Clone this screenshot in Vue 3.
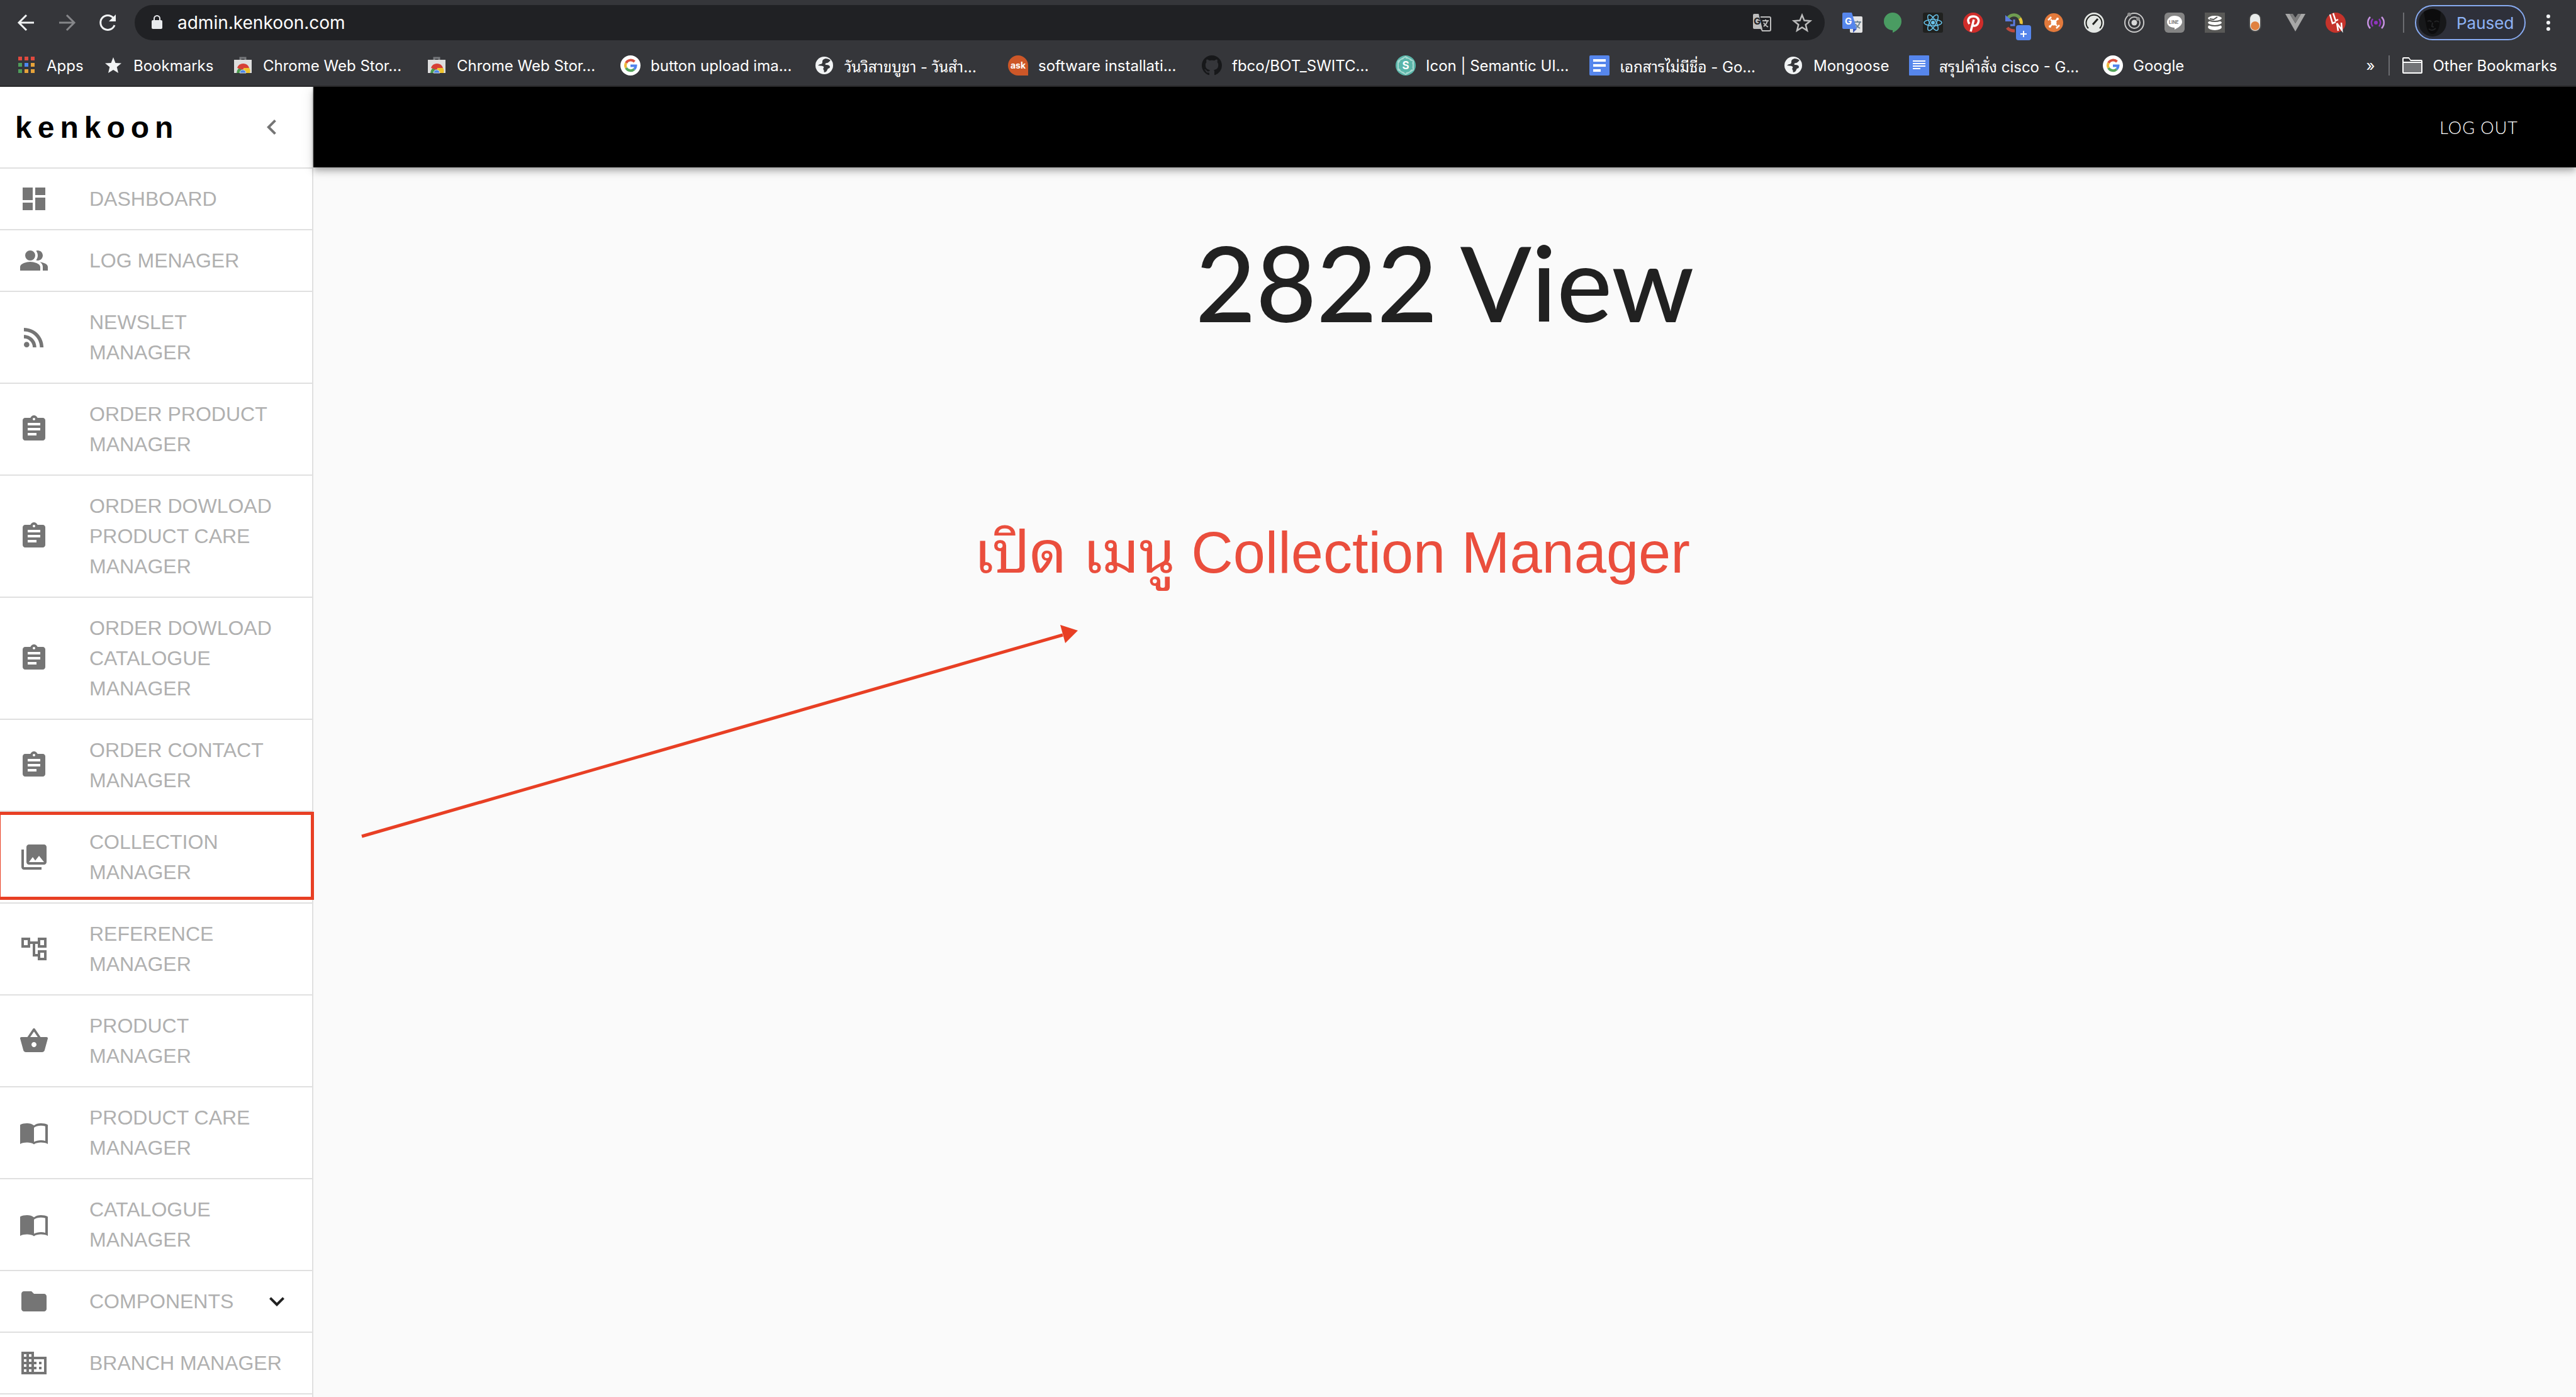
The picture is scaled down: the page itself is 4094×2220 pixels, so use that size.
<script setup>
import { ref } from 'vue'

const url = ref('admin.kenkoon.com')

const bookmarks = [
  { icon: 'apps', label: 'Apps', size: 'xs' },
  { icon: 'star', label: 'Bookmarks', size: 'md' },
  { icon: 'store', label: 'Chrome Web Stor...' },
  { icon: 'store', label: 'Chrome Web Stor...' },
  { icon: 'google', label: 'button upload ima...' },
  { icon: 'globe', label: 'วันวิสาขบูชา - วันสำ...' },
  { icon: 'ask', label: 'software installati...' },
  { icon: 'github', label: 'fbco/BOT_SWITC...' },
  { icon: 'semantic', label: 'Icon | Semantic UI...' },
  { icon: 'docsOld', label: 'เอกสารไม่มีชื่อ - Go...' },
  { icon: 'globe', label: 'Mongoose', size: 'sm' },
  { icon: 'docs', label: 'สรุปคำสั่ง cisco - G...' },
  { icon: 'google', label: 'Google', size: 'sm' }
]

const extensions = [
  'gtranslate', 'hangouts', 'react', 'pinterest', 'sync', 'drone', 'gauge',
  'target', 'line', 'stack', 'toggle', 'vue', 'ln', 'podcast'
]

const paths = {
  dashboard: 'M3 13h8V3H3v10zm0 8h8v-6H3v6zm10 0h8V11h-8v10zm0-18v6h8V3h-8z',
  people: 'M16.67 13.13C18.04 14.06 19 15.32 19 17v3h4v-3c0-2.18-3.57-3.47-6.33-3.87zM9 4a4 4 0 1 0 0 8 4 4 0 0 0 0-8zM15 12c2.21 0 4-1.79 4-4s-1.79-4-4-4c-.47 0-.91.1-1.33.24C14.5 5.27 15 6.58 15 8s-.5 2.73-1.33 3.76c.42.14.86.24 1.33.24zM9 13c-2.67 0-8 1.34-8 4v3h16v-3c0-2.66-5.33-4-8-4z',
  feed: 'M6.18 15.64a2.18 2.18 0 1 0 0 4.36 2.18 2.18 0 0 0 0-4.36zM4 4.44v2.83c7.03 0 12.73 5.7 12.73 12.73h2.83c0-8.59-6.97-15.56-15.56-15.56zm0 5.66v2.83c3.9 0 7.07 3.17 7.07 7.07h2.83c0-5.47-4.43-9.9-9.9-9.9z',
  assignment: 'M19 3h-4.18C14.4 1.84 13.3 1 12 1c-1.3 0-2.4.84-2.82 2H5c-1.1 0-2 .9-2 2v14c0 1.1.9 2 2 2h14c1.1 0 2-.9 2-2V5c0-1.1-.9-2-2-2zm-7 0c.55 0 1 .45 1 1s-.45 1-1 1-1-.45-1-1 .45-1 1-1zm2 14H7v-2h7v2zm3-4H7v-2h10v2zm0-4H7V7h10v2z',
  photos: 'M22 16V4c0-1.1-.9-2-2-2H8c-1.1 0-2 .9-2 2v12c0 1.1.9 2 2 2h12c1.1 0 2-.9 2-2zm-11-4l2.03 2.71L16 11l4 5H8l3-4zM2 6v14c0 1.1.9 2 2 2h14v-2H4V6H2z',
  tree: 'M22 11V3h-7v3H9V3H2v8h7V8h2v10h4v3h7v-8h-7v3h-2V8h2v3h7zM7 9H4V5h3v4zm10 6h3v4h-3v-4zm0-10h3v4h-3V5z',
  basket: 'M17.21 9l-4.38-6.56c-.19-.28-.51-.42-.83-.42-.32 0-.64.14-.83.43L6.79 9H2c-.55 0-1 .45-1 1 0 .09.01.18.04.27l2.54 9.27c.23.84 1 1.46 1.92 1.46h13c.92 0 1.69-.62 1.93-1.46l2.54-9.27L23 10c0-.55-.45-1-1-1h-4.79zM9 9l3-4.4L15 9H9zm3 8c-1.1 0-2-.9-2-2s.9-2 2-2 2 .9 2 2-.9 2-2 2z',
  book: 'M12 6.3C10.6 5 8.500 4.500 6.500 4.500S2.500 4.900 1 5.700V21c1.500-.8 3.500-1.200 5.500-1.200s4.100.4 5.500 1.500c1.400-1.100 3.500-1.500 5.500-1.500s4 .4 5.500 1.200V5.700c-1.500-.8-3.500-1.200-5.500-1.200S13.400 5 12 6.300zM12 8c1.500-1.200 3.500-1.600 5.500-1.600 1.200 0 2.400.2 3.500.5V18.500c-1.100-.3-2.300-.5-3.500-.5-2 0-4 .5-5.500 1.300z',
  folder: 'M10 4H4c-1.100 0-2 .9-2 2v12c0 1.100.9 2 2 2h16c1.100 0 2-.9 2-2V8c0-1.100-.9-2-2-2h-8l-2-2z',
  business: 'M12 7V3H2v18h20V7H12zM6 19H4v-2h2v2zm0-4H4v-2h2v2zm0-4H4V9h2v2zm0-4H4V5h2v2zm4 12H8v-2h2v2zm0-4H8v-2h2v2zm0-4H8V9h2v2zm0-4H8V5h2v2zm10 12h-8v-2h2v-2h-2v-2h2v-2h-2V9h8v10zm-2-8h-2v2h2v-2zm0 4h-2v2h2v-2z'
}

const menu = [
  { icon: 'dashboard', lines: ['DASHBOARD'] },
  { icon: 'people', lines: ['LOG MENAGER'] },
  { icon: 'feed', lines: ['NEWSLET', 'MANAGER'] },
  { icon: 'assignment', lines: ['ORDER PRODUCT', 'MANAGER'] },
  { icon: 'assignment', lines: ['ORDER DOWLOAD', 'PRODUCT CARE', 'MANAGER'] },
  { icon: 'assignment', lines: ['ORDER DOWLOAD', 'CATALOGUE', 'MANAGER'] },
  { icon: 'assignment', lines: ['ORDER CONTACT', 'MANAGER'] },
  { icon: 'photos', lines: ['COLLECTION', 'MANAGER'], marked: true },
  { icon: 'tree', lines: ['REFERENCE', 'MANAGER'] },
  { icon: 'basket', lines: ['PRODUCT', 'MANAGER'] },
  { icon: 'book', lines: ['PRODUCT CARE', 'MANAGER'] },
  { icon: 'book', lines: ['CATALOGUE', 'MANAGER'] },
  { icon: 'folder', lines: ['COMPONENTS'], expandable: true },
  { icon: 'business', lines: ['BRANCH MANAGER'] }
]
</script>

<template>
  <div class="window">
    <div class="browser">
      <div class="toolbar">
        <div class="nav-buttons">
          <button type="button" aria-label="Back">
            <svg viewBox="0 0 32 32" class="stroke light"><path d="M28 16H5M16 4L4 16l12 12" /></svg>
          </button>
          <button type="button" aria-label="Forward">
            <svg viewBox="0 0 32 32" class="stroke dim"><path d="M4 16h23M16 4l12 12-12 12" /></svg>
          </button>
          <button type="button" aria-label="Reload">
            <svg viewBox="0 0 32 32">
              <path d="M26 8.500A11.500 11.500 0 1 0 28 20" fill="none" stroke="#f1f3f4" stroke-width="3" />
              <path d="M30 3v11H19z" fill="#f1f3f4" />
            </svg>
          </button>
        </div>

        <div class="address">
          <svg viewBox="0 0 32 32">
            <rect x="7" y="12" width="17" height="14" rx="2" fill="#e8eaed" />
            <path d="M11 13V9.500a4.500 4.500 0 0 1 9 0V13" fill="none" stroke="#e8eaed" stroke-width="2" />
          </svg>
          <input v-model="url" type="text" aria-label="Address" />
          <button type="button" aria-label="Translate this page">
            <svg viewBox="0 0 32 32">
              <path d="M14 7h14a2 2 0 0 1 2 2v18a2 2 0 0 1-2 2H17l-3-5" fill="none" stroke="#bdbdbd" stroke-width="2" />
              <path d="M4 2h7l6 24H4a2 2 0 0 1-2-2V4a2 2 0 0 1 2-2z" fill="#bdbdbd" />
              <text x="3" y="19" font-size="15" font-weight="700" fill="#202124">G</text>
              <path d="M17 13h10M22 11v2M25 13c-1 5-4 7-6 9M19 16c1 3 4 5 7 7" fill="none" stroke="#bdbdbd" stroke-width="2" />
            </svg>
          </button>
          <button type="button" aria-label="Bookmark this page">
            <svg viewBox="0 0 32 32"><path d="M16 4l3.500 8.600 9.500.7-7.300 6 2.300 9.200-8-5-8 5 2.300-9.200-7.300-6 9.500-.7z" fill="none" stroke="#bdbdbd" stroke-width="2.500" /></svg>
          </button>
        </div>

        <div class="extensions">
          <button v-for="name in extensions" :key="name" type="button" :aria-label="name">
            <svg v-if="name === 'gtranslate'" viewBox="0 0 32 32">
              <rect x="12" y="6" width="20" height="26" rx="2" fill="#e4e4e4" />
              <path d="M19 15h11M24 13v2M28 15c-1 5-4 7-6 9M21 18c1 3 4 5 7 7" fill="none" stroke="#6f8593" stroke-width="2" />
              <path d="M17 26h6l-6 6z" fill="#3a56b8" />
              <path d="M2 0h13l8 26H2a2 2 0 0 1-2-2V2a2 2 0 0 1 2-2z" fill="#5686ec" />
              <text x="4" y="19" font-size="15" font-weight="700" fill="#fff">G</text>
            </svg>
            <svg v-else-if="name === 'hangouts'" viewBox="0 0 32 32">
              <path d="M16 0a14 14 0 0 1 14 14c0 8-6 14-14 18v-4A14 14 0 0 1 16 0z" fill="#4a9c62" />
            </svg>
            <svg v-else-if="name === 'react'" viewBox="0 0 32 32">
              <rect width="32" height="32" rx="3" fill="#20211f" />
              <g fill="none" stroke="#69c4ec" stroke-width="1.500">
                <ellipse cx="16" cy="16" rx="14" ry="5" />
                <ellipse cx="16" cy="16" rx="14" ry="5" transform="rotate(60 16 16)" />
                <ellipse cx="16" cy="16" rx="14" ry="5" transform="rotate(120 16 16)" />
              </g>
              <circle cx="16" cy="16" r="3" fill="#69c4ec" />
            </svg>
            <svg v-else-if="name === 'pinterest'" viewBox="0 0 32 32">
              <circle cx="16" cy="16" r="16" fill="#cf2d2a" />
              <path d="M10 18c-5-7 0-12 6-12 7 0 10 5 8 10-2 6-8 6-9 3M17 11l-5 19" fill="none" stroke="#fff" stroke-width="3.500" />
            </svg>
            <svg v-else-if="name === 'sync'" viewBox="0 0 48 48" class="badged">
              <path d="M7 9c5-7 15-7 19 0" fill="none" stroke="#6f9d50" stroke-width="5" />
              <path d="M26 9c2 3 3 6 2 9" fill="none" stroke="#e8c53a" stroke-width="5" />
              <path d="M3 4v10h12z" fill="#5b7be0" />
              <path d="M17 11v9h-6" fill="none" stroke="#5b7be0" stroke-width="3" />
              <path d="M6 24c3 4 7 5 12 5" fill="none" stroke="#bc4a3c" stroke-width="5" />
              <rect x="20" y="20" width="24" height="24" rx="4" fill="#5686ec" />
              <path d="M32 29v10M27 34h10" stroke="#fff" stroke-width="2" />
            </svg>
            <svg v-else-if="name === 'drone'" viewBox="0 0 32 32">
              <circle cx="16" cy="16" r="15" fill="#e27a3c" />
              <path d="M11 11l10 10M21 11L11 21M7 12l5-5M20 25l5-5" stroke="#fff" stroke-width="2.500" />
              <circle cx="16" cy="16" r="4.500" fill="#fff" />
              <circle cx="22" cy="10" r="2" fill="#fff" />
              <circle cx="10" cy="22" r="2" fill="#fff" />
            </svg>
            <svg v-else-if="name === 'gauge'" viewBox="0 0 32 32">
              <circle cx="16" cy="16" r="16" fill="#e4e7e4" />
              <path d="M7 25A12.500 12.500 0 1 1 25 25" fill="none" stroke="#20221f" stroke-width="2" />
              <path d="M14 19l8-9" stroke="#20221f" stroke-width="3" />
            </svg>
            <svg v-else-if="name === 'target'" viewBox="0 0 32 32">
              <g fill="none" stroke="#c9c9c9" stroke-width="2">
                <circle cx="16" cy="16" r="15" />
                <circle cx="16" cy="16" r="9" />
              </g>
              <circle cx="16" cy="16" r="4.500" fill="#d8d8d8" />
              <circle cx="8" cy="3" r="3" fill="#909090" />
              <circle cx="22" cy="10" r="3" fill="#909090" />
            </svg>
            <svg v-else-if="name === 'line'" viewBox="0 0 32 32">
              <rect width="32" height="32" rx="6" fill="#848484" />
              <path d="M16 5c7 0 12 4 12 10 0 5-6 9-12 12v-3C9 24 4 20 4 15S9 5 16 5z" fill="#fff" />
              <text x="7" y="18" font-size="7" font-weight="700" fill="#777">LINE</text>
            </svg>
            <svg v-else-if="name === 'stack'" viewBox="0 0 32 32">
              <rect width="32" height="32" fill="#595957" />
              <g fill="#fff">
                <ellipse cx="16" cy="23" rx="11" ry="5" />
                <ellipse cx="16" cy="16" rx="12" ry="5" stroke="#595957" stroke-width="2" />
                <ellipse cx="16" cy="9" rx="12" ry="5" stroke="#595957" stroke-width="2" />
              </g>
              <path d="M8 10l6 1 6-4" fill="none" stroke="#595957" stroke-width="2" />
            </svg>
            <svg v-else-if="name === 'toggle'" viewBox="0 0 32 32">
              <rect x="6" y="1" width="20" height="30" rx="10" fill="#4a4a4a" />
              <rect x="8" y="2" width="16" height="27" rx="8" fill="#e9ebea" />
              <circle cx="16" cy="21" r="7" fill="#e0813f" />
            </svg>
            <svg v-else-if="name === 'vue'" viewBox="0 0 32 32">
              <path d="M0 2h7l9 15 9-15h7L16 30z" fill="#a7a7a7" />
              <path d="M7 2h5l4 6 4-6h5l-9 15z" fill="#7c7c7c" />
            </svg>
            <svg v-else-if="name === 'ln'" viewBox="0 0 32 32">
              <circle cx="16" cy="16" r="16" fill="#c5332b" />
              <path d="M7 3l4 14 5-2M12 1l4 12 4-2" fill="none" stroke="#fff" stroke-width="2.500" />
              <path d="M20 29l-2-12 8 11-1-12" fill="none" stroke="#fff" stroke-width="2.500" />
            </svg>
            <svg v-else viewBox="0 0 32 32">
              <g fill="none" stroke-width="2.500">
                <path d="M7 7c-5 5-5 13 0 18M25 7c5 5 5 13 0 18" stroke="#c793e2" />
                <path d="M11 10c-3 4-3 8 0 12M21 10c3 4 3 8 0 12" stroke="#8f35bd" />
              </g>
              <circle cx="16" cy="16" r="3" fill="#8f35bd" />
            </svg>
          </button>
        </div>

        <span class="divider tools-divider"></span>

        <button type="button" class="profile">
          <svg viewBox="0 0 44 44">
            <circle cx="22" cy="22" r="22" fill="#17181a" />
            <path d="M8 5c8-6 20-6 27 0l-2 20c-1 9-6 15-11 15S13 34 12 26z" fill="#0c0c0d" />
            <path d="M14 20c3-2 5-1 6 1M25 21c2-2 5-2 7 0M22 22l-1 6 3 1M16 32c4 3 8 2 11-1" fill="none" stroke="#232426" stroke-width="2" />
          </svg>
          <span>Paused</span>
        </button>

        <button type="button" class="more" aria-label="More">
          <svg viewBox="0 0 32 32" fill="#f1f3f4">
            <circle cx="16" cy="6" r="3" />
            <circle cx="16" cy="16" r="3" />
            <circle cx="16" cy="26" r="3" />
          </svg>
        </button>
      </div>

      <nav class="bookmarks" aria-label="Bookmarks">
        <a v-for="(item, i) in bookmarks" :key="i" href="#" class="bookmark" :class="item.size">
          <svg v-if="item.icon === 'apps'" viewBox="0 0 32 32">
            <g fill="#e04a3f"><path d="M3 2h6v6H3zM13 2h6v6h-6zM23 2h6v6h-6z" /></g>
            <path d="M3 12h6v6H3zM3 22h6v6H3z" fill="#4f9e5b" />
            <path d="M13 12h6v6h-6z" fill="#4c88f0" />
            <path d="M23 12h6v6h-6zM13 22h6v6h-6zM23 22h6v6h-6z" fill="#e6a33a" />
          </svg>
          <svg v-else-if="item.icon === 'star'" viewBox="0 0 32 32">
            <path d="M16 3l3.500 9 9.500.6-7.300 6L24 28l-8-5-8 5 2.300-9.400-7.300-6 9.500-.6z" fill="#f1f3f4" />
          </svg>
          <svg v-else-if="item.icon === 'store'" viewBox="0 0 32 32">
            <path d="M12 8V4h8v4" fill="none" stroke="#77797c" stroke-width="3" />
            <path d="M2 7h28v21H2z" fill="#dedede" />
            <path d="M6 28a10 10 0 0 1 20 0z" fill="#4a9b4e" />
            <path d="M7 20a10 10 0 0 1 19 0l-10 3z" fill="#d63f35" />
            <path d="M17 20h9c2 3 2 5 1 8H16z" fill="#eec32d" />
            <path d="M11 28a5 5 0 0 1 10 0z" fill="#4a86e8" stroke="#dedede" />
          </svg>
          <svg v-else-if="item.icon === 'google'" viewBox="0 0 32 32">
            <circle cx="16" cy="16" r="16" fill="#fff" />
            <g fill="none" stroke-width="4">
              <path d="M9 12a8.500 8.500 0 0 1 13.500-2" stroke="#d9503f" />
              <path d="M9 20a8.500 8.500 0 0 1 0-8" stroke="#efb83a" />
              <path d="M22 22a8.500 8.500 0 0 1-13-2" stroke="#55a55b" />
              <path d="M16 16.500h8.500c0 2-1 4-2.500 5.500" stroke="#5083ec" />
            </g>
          </svg>
          <svg v-else-if="item.icon === 'globe'" viewBox="0 0 32 32">
            <circle cx="16" cy="16" r="14" fill="#f1f3f4" />
            <path d="M18 5c-4 1-5 3-5 5 0 3-1 4-4 4l-3 2c4 1 7 0 9 2 1 2-2 3 0 5 1 1 0 2 1 4 5-1 4-4 6-6 2-1 3-1 3-3-1-3-4-3-7-3-1-2 0-3 3-3 3-1 3-3 5-4-2-2-5-3-8-3z" fill="#35363a" />
          </svg>
          <svg v-else-if="item.icon === 'ask'" viewBox="0 0 32 32">
            <path d="M16 0a16 16 0 0 1 16 16v16H16a16 16 0 0 1 0-32z" fill="#cd5728" />
            <text x="16" y="21" font-size="14" font-weight="700" text-anchor="middle" fill="#fff">ask</text>
          </svg>
          <svg v-else-if="item.icon === 'github'" viewBox="0 0 16 16">
            <path d="M8 0C3.580 0 0 3.580 0 8c0 3.540 2.290 6.530 5.470 7.590.4.070.55-.17.55-.38 0-.19-.01-.82-.01-1.490-2.010.37-2.530-.49-2.690-.94-.09-.23-.48-.94-.82-1.130-.28-.15-.68-.52-.01-.53.63-.01 1.080.58 1.230.82.72 1.210 1.870.87 2.330.66.07-.52.28-.87.51-1.070-1.780-.2-3.640-.89-3.640-3.950 0-.87.31-1.590.82-2.150-.08-.2-.36-1.020.08-2.120 0 0 .67-.21 2.200.82.64-.18 1.320-.27 2-.27s1.360.09 2 .27c1.530-1.040 2.200-.82 2.200-.82.44 1.100.16 1.920.08 2.120.51.56.82 1.270.82 2.150 0 3.070-1.870 3.750-3.650 3.950.29.25.54.73.54 1.480 0 1.070-.01 1.930-.01 2.200 0 .21.15.46.55.38A8.010 8.010 0 0 0 16 8c0-4.420-3.580-8-8-8z" fill="#17181a" />
          </svg>
          <svg v-else-if="item.icon === 'semantic'" viewBox="0 0 32 32">
            <circle cx="16" cy="16" r="16" fill="#5ab5a9" />
            <g fill="none" stroke="#a5d8d0" stroke-width="2">
              <circle cx="16" cy="16" r="12" stroke-dasharray="4 3" />
              <path d="M16 2l12 7v14l-12 7-12-7V9z" />
            </g>
            <circle cx="16" cy="16" r="7" fill="#5ab5a9" />
            <text x="16" y="22" font-size="17" font-weight="700" text-anchor="middle" fill="#fff">S</text>
          </svg>
          <svg v-else-if="item.icon === 'docsOld'" viewBox="0 0 32 32">
            <rect width="32" height="32" rx="2" fill="#5686ec" />
            <path d="M6 8h20M6 16h20M6 24h12" stroke="#fff" stroke-width="4" />
          </svg>
          <svg v-else viewBox="0 0 32 32">
            <rect width="32" height="32" rx="1" fill="#5686ec" />
            <path d="M6 9h20M6 13h20M6 17h20M6 21h12" stroke="#fff" stroke-width="2" />
          </svg>
          <span>{{ item.label }}</span>
        </a>
        <button type="button" class="overflow" aria-label="More bookmarks">»</button>
        <span class="divider"></span>
        <a href="#" class="bookmark other">
          <svg viewBox="0 0 32 32">
            <path d="M1 27V5a1 1 0 0 1 1-1h8l3 4h17a1 1 0 0 1 1 1v18a1 1 0 0 1-1 1H2a1 1 0 0 1-1-1z" fill="#737477" stroke="#fff" stroke-width="2" />
            <path d="M2 5h8l3 4h17v2H2z" fill="#35363a" />
            <path d="M1 11h30" stroke="#fff" stroke-width="2" />
          </svg>
          <span>Other Bookmarks</span>
        </a>
      </nav>
    </div>

    <div class="app">
      <aside class="sidebar">
        <div class="brand">
          <a href="#" class="logo">kenkoon</a>
          <button type="button" aria-label="Collapse menu">
            <svg viewBox="0 0 24 24"><path d="M15.410 7.410L14 6l-6 6 6 6 1.410-1.410L10.830 12z" fill="#757575" /></svg>
          </button>
        </div>
        <nav aria-label="Main menu">
          <a v-for="(item, i) in menu" :key="i" href="#" class="item" :class="{ marked: item.marked }">
            <svg viewBox="0 0 24 24" class="item-icon"><path :d="paths[item.icon]" fill-rule="evenodd" /></svg>
            <span class="item-label"><span v-for="line in item.lines" :key="line">{{ line }}</span></span>
            <svg v-if="item.expandable" viewBox="0 0 24 24" class="expand">
              <path d="M16.590 8.590L12 13.170 7.410 8.590 6 10l6 6 6-6z" />
            </svg>
          </a>
        </nav>
      </aside>

      <div class="content">
        <header class="appbar">
          <button type="button">LOG OUT</button>
        </header>
        <main>
          <h1>2822 View</h1>
          <p class="note">เปิด เมนู Collection Manager</p>
          <svg class="arrow" viewBox="0 0 1140 336">
            <path d="M2 332L1116 12" stroke="#e83f24" stroke-width="5" />
            <path d="M1140 5l-28-9 8 29z" fill="#e83f24" />
          </svg>
        </main>
      </div>
    </div>
  </div>
</template>

<style>
body {
  margin: 0;
}
</style>

<style scoped>
.window {
  display: flex;
  flex-direction: column;
  min-height: 100vh;
  overflow: hidden;
  background: #fafafa;
  font-family: "Liberation Sans", "Noto Sans Thai Looped", "Noto Looped Thai", Loma, Garuda, Waree, FreeSans, sans-serif;
}

button {
  display: flex;
  padding: 0;
  border: 0;
  background: none;
  font: inherit;
  letter-spacing: inherit;
  color: inherit;
}

a {
  color: inherit;
  text-decoration: none;
}

svg {
  display: block;
  flex: none;
  overflow: visible;
}

.browser {
  position: relative;
  z-index: 2;
  border-bottom: 2px solid #28282a;
  background: #35363a;
  color: #fff;
  font-family: Inter, "Noto Sans Thai Looped", "Noto Looped Thai", Loma, Garuda, Waree, FreeSans, sans-serif;
}

.browser svg {
  width: 32px;
  height: 32px;
}

.stroke {
  fill: none;
  stroke-width: 3;
}

.light {
  stroke: #f1f3f4;
}

.dim {
  stroke: #86878a;
}

.toolbar {
  display: flex;
  align-items: center;
  height: 72px;
  padding: 0 28px 0 26px;
}

.nav-buttons,
.extensions {
  display: flex;
  gap: 32px;
}

.address {
  display: flex;
  flex: 1;
  align-items: center;
  height: 56px;
  margin: 0 28px;
  padding: 0 20px;
  border-radius: 28px;
  background: #202124;
}

.address input {
  flex: 1;
  min-width: 0;
  margin-left: 16px;
  padding: 0;
  border: 0;
  outline: 0;
  background: none;
  color: #fff;
  font: 28px Inter, sans-serif;
}

.address button + button {
  margin-left: 32px;
}

.browser .badged {
  width: 48px;
  height: 48px;
  margin-right: -16px;
  margin-bottom: -16px;
}

.divider {
  flex: none;
  width: 2px;
  height: 32px;
  background: #6b6c70;
}

.tools-divider {
  margin: 0 17px 0 27px;
}

.profile {
  box-sizing: border-box;
  align-items: center;
  gap: 16px;
  width: 176px;
  height: 56px;
  padding-left: 4px;
  border: 2px solid #87aaf0;
  border-radius: 28px;
  background: #2e303a;
  color: #8fb3f6;
  font-size: 26px;
}

.browser .profile svg {
  width: 44px;
  height: 44px;
}

.more {
  margin-left: 20px;
}

.bookmarks {
  display: flex;
  align-items: center;
  height: 64px;
  padding: 0 30px 0 26px;
  font-size: 24px;
  white-space: nowrap;
}

.bookmark {
  display: flex;
  flex: none;
  align-items: center;
  gap: 16px;
  width: 308px;
}

.bookmark.md {
  width: 206px;
}

.bookmark.sm {
  width: 200px;
}

.bookmark.xs {
  width: 138px;
}

.bookmark.other {
  width: auto;
  margin-left: 20px;
}

.overflow {
  margin: 0 22px 0 auto;
}

.app {
  display: flex;
  flex: 1;
}

.sidebar {
  flex: none;
  width: 496px;
  border-right: 2px solid #e0e0e0;
  background: #fff;
}

.brand {
  display: flex;
  align-items: center;
  justify-content: space-between;
  height: 128px;
  padding: 0 40px 0 24px;
  border-bottom: 2px solid #e0e0e0;
}

.logo {
  color: #000;
  font-size: 48px;
  font-weight: 700;
  letter-spacing: 9px;
}

.brand svg,
.item-icon,
.expand {
  width: 48px;
  height: 48px;
}

.item {
  position: relative;
  display: flex;
  align-items: center;
  padding: 24px 32px 24px 30px;
  border-bottom: 2px solid #e0e0e0;
}

.item-icon {
  margin-right: 64px;
  fill: #757575;
}

.item-label {
  flex: 1;
  color: #b0b0b0;
  font-size: 32px;
  line-height: 48px;
  white-space: nowrap;
}

.item-label span {
  display: block;
}

.expand {
  fill: #212121;
}

.marked::after {
  content: "";
  position: absolute;
  inset: 0 -3px 4px -4px;
  border: 5px solid #e83f24;
}

.content {
  flex: 1;
  min-width: 0;
}

.appbar {
  position: relative;
  display: flex;
  align-items: center;
  justify-content: flex-end;
  height: 128px;
  padding: 0 92px;
  background: #000;
  box-shadow: 0 4px 8px -2px rgba(0, 0, 0, 0.2), 0 8px 10px 0 rgba(0, 0, 0, 0.14), 0 2px 20px 0 rgba(0, 0, 0, 0.12);
  color: #fff;
  font-family: Lato, sans-serif;
  font-size: 27px;
  font-weight: 300;
  letter-spacing: 1px;
}

main {
  position: relative;
}

h1 {
  margin: 0;
  padding-top: 78px;
  color: #212121;
  font-family: Lato, sans-serif;
  font-size: 166px;
  font-weight: 500;
  line-height: 208px;
  text-align: center;
}

.note {
  position: absolute;
  top: 560px;
  left: 1050px;
  margin: 0;
  color: #ea4e3d;
  font-size: 92px;
  line-height: 104px;
  white-space: nowrap;
}

.arrow {
  position: absolute;
  top: 731px;
  left: 75px;
  width: 1140px;
  height: 336px;
}
</style>
